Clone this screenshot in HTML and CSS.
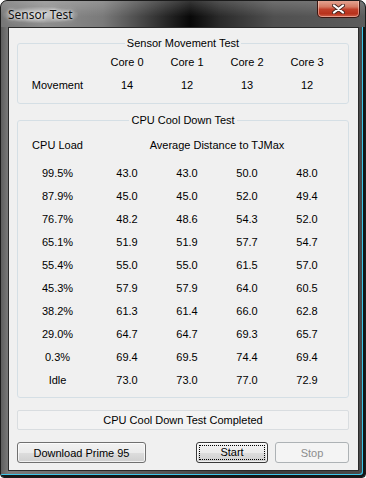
FILE: index.html
```html
<!DOCTYPE html>
<html lang="en">

<head>
    <meta charset="UTF-8">
    <meta name="viewport" content="width=device-width, initial-scale=1.0">
    <title>Sensor Test</title>
    <link rel="stylesheet" href="styles.css">
</head>

<body>
    <div class="window">
        <!--标题栏-->
        <div class="titlebar">
            <span class="title">Sensor Test</span>
            <button class="close">
                <svg width="13" height="10" viewBox="0 0 13 10">
                    <path d="M2 1.5 L11 8.5 M11 1.5 L2 8.5" stroke="#4a2a24" stroke-width="4" stroke-linecap="round" fill="none"/>
                    <path d="M2 1.5 L11 8.5 M11 1.5 L2 8.5" stroke="#ffffff" stroke-width="2.2" stroke-linecap="round" fill="none"/>
                </svg>
            </button>
        </div>

        <div class="client">
            <fieldset class="group movement">
                <legend>Sensor Movement Test</legend>
                <div class="grid">
                    <span></span>
                    <span>Core 0</span>
                    <span>Core 1</span>
                    <span>Core 2</span>
                    <span>Core 3</span>
                    <span>Movement</span>
                    <span>14</span>
                    <span>12</span>
                    <span>13</span>
                    <span>12</span>
                </div>
            </fieldset>

            <fieldset class="group cooldown">
                <legend>CPU Cool Down Test</legend>
                <div class="grid head">
                    <span>CPU Load</span>
                    <span class="wide">Average Distance to TJMax</span>
                </div>
                <div class="grid">
                    <span>99.5%</span><span>43.0</span><span>43.0</span><span>50.0</span><span>48.0</span>
                    <span>87.9%</span><span>45.0</span><span>45.0</span><span>52.0</span><span>49.4</span>
                    <span>76.7%</span><span>48.2</span><span>48.6</span><span>54.3</span><span>52.0</span>
                    <span>65.1%</span><span>51.9</span><span>51.9</span><span>57.7</span><span>54.7</span>
                    <span>55.4%</span><span>55.0</span><span>55.0</span><span>61.5</span><span>57.0</span>
                    <span>45.3%</span><span>57.9</span><span>57.9</span><span>64.0</span><span>60.5</span>
                    <span>38.2%</span><span>61.3</span><span>61.4</span><span>66.0</span><span>62.8</span>
                    <span>29.0%</span><span>64.7</span><span>64.7</span><span>69.3</span><span>65.7</span>
                    <span>0.3%</span><span>69.4</span><span>69.5</span><span>74.4</span><span>69.4</span>
                    <span>Idle</span><span>73.0</span><span>73.0</span><span>77.0</span><span>72.9</span>
                </div>
            </fieldset>

            <div class="status">CPU Cool Down Test Completed</div>

            <div class="buttons">
                <button class="btn download">Download Prime 95</button>
                <button class="btn start"><span class="focus">Start</span></button>
                <button class="btn stop" disabled>Stop</button>
            </div>
        </div>
    </div>
</body>

</html>
```

FILE: styles.css
```css
* {
    margin: 0;
    padding: 0;
    box-sizing: border-box;
}

body {
    background-color: #ffffff;
    font-family: "Liberation Sans", Arial, sans-serif;
    font-size: 11px;
    color: #000;
}

/*窗口外框*/
.window {
    width: 366px;
    height: 478px;
    border: 1px solid #1b1b1b;
    border-radius: 7px 7px 4px 4px;
    padding: 0 6px 6px 7px;
    background: linear-gradient(90deg, #5e5e5e 0%, #7a7a7a 2%, #5a5a5a 40%, #3a3a3a 70%, #4a4a4a 100%);
    box-shadow: inset -2px -2px 0 #151515, inset -3px -3px 0 #3cc6ea;
    overflow: hidden;
}

/*标题栏*/
.titlebar {
    height: 26px;
    margin: 0 -6px 0 -7px;
    padding: 0 5px 0 2px;
    display: flex;
    justify-content: space-between;
    align-items: flex-start;
    background:
        linear-gradient(180deg, rgba(255, 255, 255, 0.18), rgba(255, 255, 255, 0) 60%),
        linear-gradient(90deg, #767676 0%, #8e8e8e 12%, #7a7a7a 28%, #2e2e2e 44%, #080808 52%, #2a2a2a 60%, #505050 75%, #5c5c5c 100%);
    border-radius: 6px 6px 0 0;
}

.title {
    font-family: "Noto Sans", "Open Sans", sans-serif;
    font-size: 12px;
    line-height: 16px;
    margin-top: 6px;
    padding: 0 5px;
    color: #101010;
    background: radial-gradient(ellipse at center, rgba(255, 255, 255, 0.55) 0%, rgba(255, 255, 255, 0.2) 55%, rgba(255, 255, 255, 0) 75%);
    text-shadow: 0 0 6px rgba(255, 255, 255, 0.9), 0 0 3px rgba(255, 255, 255, 0.8);
}

.close {
    width: 43px;
    height: 18px;
    margin-top: -1px;
    border: 1px solid #3b1610;
    border-top: none;
    border-radius: 0 0 5px 5px;
    background: linear-gradient(180deg, #e6aa98 0%, #d47a63 40%, #c1402a 55%, #b8321c 80%, #d0604a 100%);
    box-shadow: inset 0 0 0 1px rgba(255, 220, 210, 0.5);
    display: flex;
    align-items: center;
    justify-content: center;
}

/*客户区*/
.client {
    border: 1px solid #2a2a2a;
    background-color: #f0f0f0;
    padding: 8px 9px 7px 8px;
}

.group {
    width: 332px;
    border: 1px solid #d5dfe5;
    border-radius: 3px;
    min-width: 0;
}

.group legend {
    margin: 0 auto;
    padding: 0 2px;
    line-height: 14px;
}

.movement {
    padding: 0 0 7px 0;
}

.cooldown {
    margin-top: 9px;
    padding: 6px 0 6px 0;
}

.grid {
    display: grid;
    grid-template-columns: 79px repeat(4, 60px);
    grid-auto-rows: 23px;
    align-items: center;
    text-align: center;
}

.grid.head {
    margin-bottom: 5px;
}

.grid .wide {
    grid-column: 2 / 6;
}

.status {
    margin-top: 12px;
    width: 332px;
    height: 20px;
    border: 1px solid #d9dde0;
    border-radius: 2px;
    background-color: #f3f3f3;
    text-align: center;
    line-height: 18px;
}

/*按钮*/
.buttons {
    margin-top: 12px;
    width: 332px;
    display: flex;
    gap: 7px;
}

.btn {
    height: 21px;
    font-family: inherit;
    font-size: 11px;
    color: #000;
    border: 1px solid #707070;
    border-radius: 3px;
    background: linear-gradient(180deg, #f2f2f2 0%, #ebebeb 50%, #dddddd 51%, #cfcfcf 100%);
    box-shadow: inset 0 0 0 1px rgba(255, 255, 255, 0.7);
}

.download {
    width: 129px;
}

.start {
    width: 72px;
    margin-left: auto;
    border-color: #3a3a3a;
    padding: 2px;
}

.start .focus {
    display: block;
    height: 100%;
    border: 1px dotted #000;
    line-height: 13px;
}

.stop {
    width: 74px;
    color: #8d8d8d;
    border-color: #adb2b5;
    background: #f4f4f4;
    box-shadow: none;
}
```
